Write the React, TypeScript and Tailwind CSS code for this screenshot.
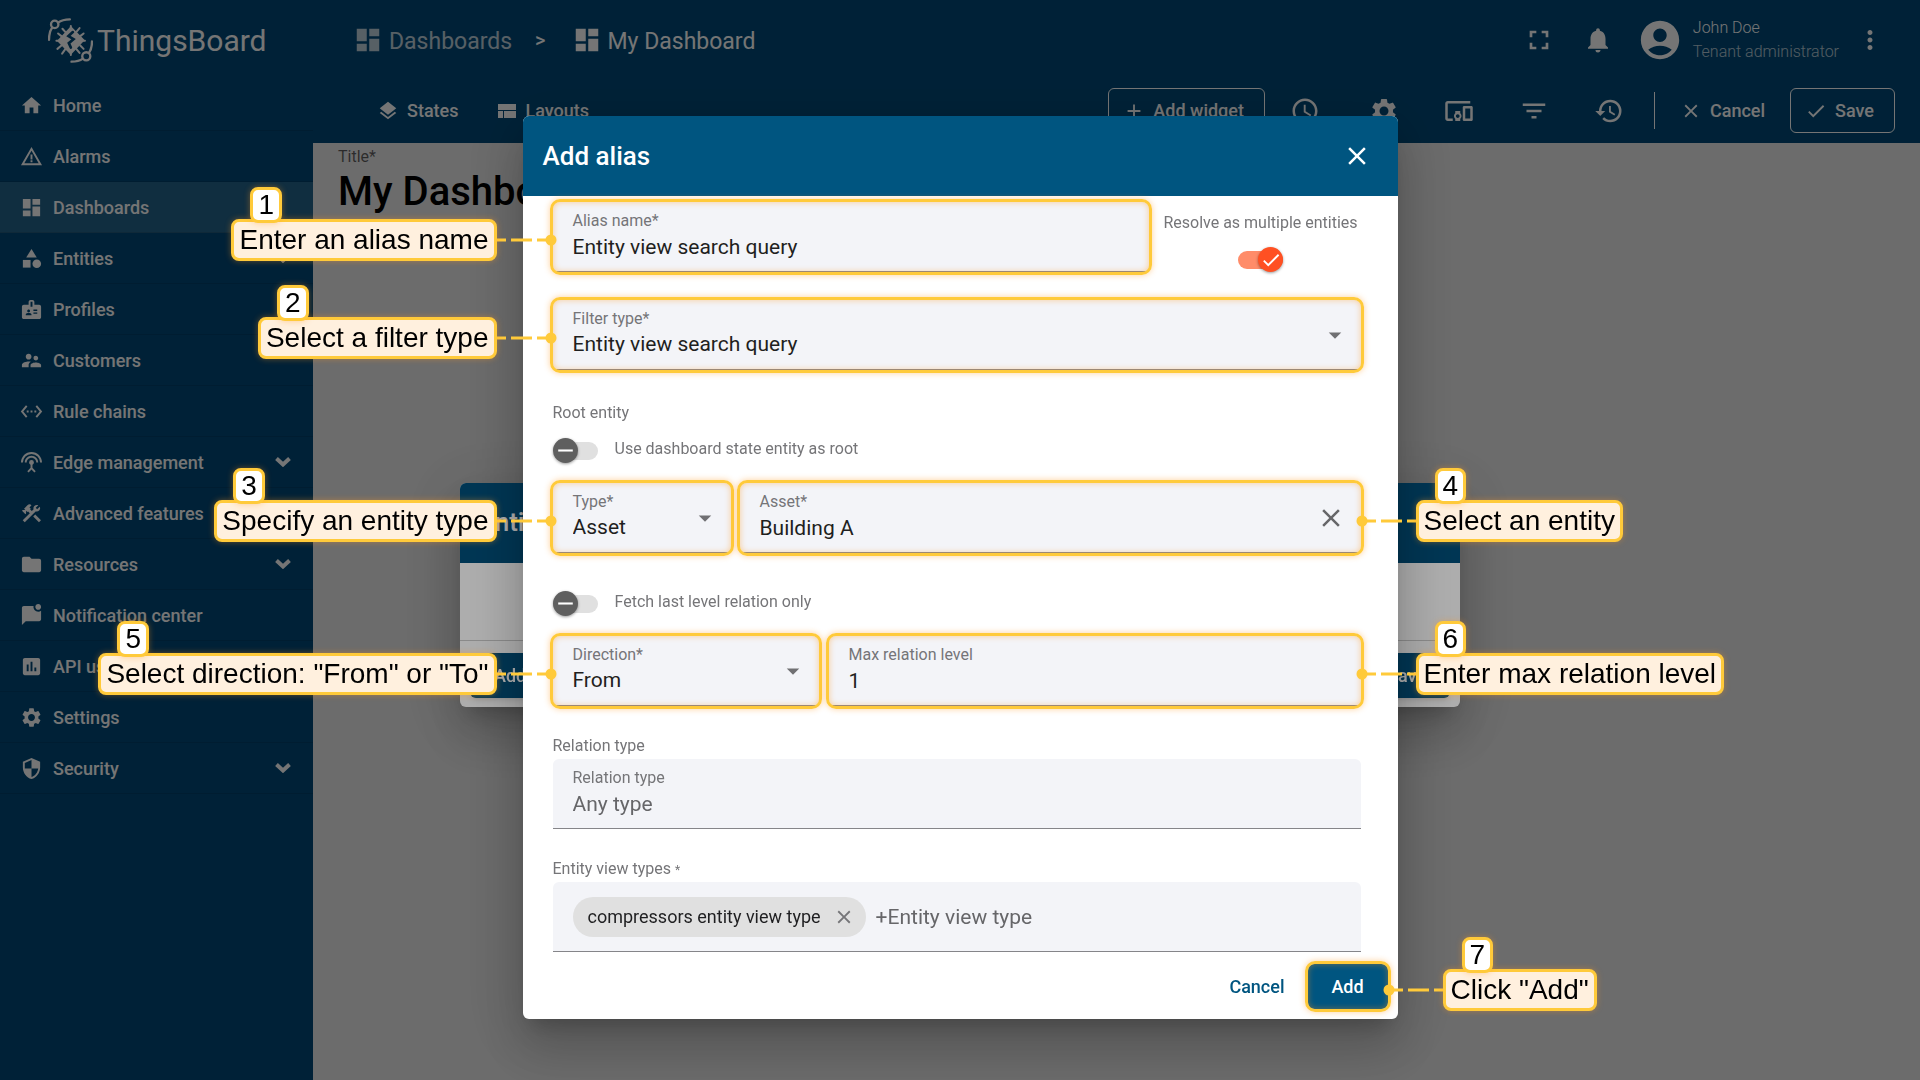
import { useState } from "react";
import type { ReactNode } from "react";
import type { IconType } from "react-icons";
import {
  MdAccessTime,
  MdAccountCircle,
  MdAdd,
  MdArrowDropDown,
  MdBadge,
  MdCategory,
  MdCheck,
  MdClose,
  MdConstruction,
  MdDashboard,
  MdDevicesOther,
  MdFilterList,
  MdFolder,
  MdFullscreen,
  MdHistory,
  MdHome,
  MdInsertChart,
  MdLayers,
  MdMarkChatUnread,
  MdMoreVert,
  MdNotifications,
  MdRemove,
  MdSecurity,
  MdSettings,
  MdSettingsEthernet,
  MdSettingsInputAntenna,
  MdSupervisorAccount,
  MdWarningAmber,
} from "react-icons/md";

type MenuItem = {
  name: string;
  icon: IconType;
  expandable?: boolean;
  active?: boolean;
};

const menu: MenuItem[] = [
  { name: "Home", icon: MdHome },
  { name: "Alarms", icon: MdWarningAmber },
  { name: "Dashboards", icon: MdDashboard, active: true },
  { name: "Entities", icon: MdCategory, expandable: true },
  { name: "Profiles", icon: MdBadge },
  { name: "Customers", icon: MdSupervisorAccount },
  { name: "Rule chains", icon: MdSettingsEthernet },
  { name: "Edge management", icon: MdSettingsInputAntenna, expandable: true },
  { name: "Advanced features", icon: MdConstruction, expandable: true },
  { name: "Resources", icon: MdFolder, expandable: true },
  { name: "Notification center", icon: MdMarkChatUnread },
  { name: "API usage", icon: MdInsertChart },
  { name: "Settings", icon: MdSettings },
  { name: "Security", icon: MdSecurity, expandable: true },
];

function Logo() {
  return (
    <svg viewBox="0 0 134 134" className="size-[45px]" fill="none" stroke="currentColor" strokeWidth="7" strokeLinecap="round">
      <circle cx="20" cy="19" r="11" />
      <circle cx="114" cy="114" r="12" />
      <path d="M3 65C3 50 5 39 12 29M30 14C40 6 50 4 65 4" />
      <path d="M131 70C131 85 128 95 122 104M104 121C94 128 84 130 70 130" />
      <path
        d="M52 42L43 32M68 30V24M40 54L30 46M84 42L94 30M96 54L106 46M104 68H110M96 82L106 92M84 92L94 104M32 68H25M40 82L28 92M52 92L42 106M68 104V110"
        strokeWidth="6"
      />
      <path
        d="M68 30L104 66L68 104L32 68Z"
        fill="currentColor"
        strokeLinejoin="round"
        strokeWidth="8"
      />
      <path d="M74 42L61 54L76 63L62 75L68 88" stroke="#004a79" strokeWidth="8" />
    </svg>
  );
}

function Chevron() {
  return (
    <svg viewBox="0 0 16 10" className="h-[10px] w-4" fill="none" stroke="currentColor" strokeWidth="4">
      <path d="M1.5 1.5L8 7.5L14.5 1.5" />
    </svg>
  );
}

function LayoutsIcon() {
  return (
    <svg viewBox="0 0 22 22" className="size-[22px]" fill="currentColor">
      <path d="M2 4h18v6H2zM2 11h5v7H2zM8 11h12v7H8z" />
    </svg>
  );
}

function Sidebar() {
  return (
    <aside className="w-[313px] shrink-0 bg-[#004a79] text-white">
      <div className="flex h-20 items-center gap-1 pl-12">
        <Logo />
        <span className="text-[30px]">ThingsBoard</span>
      </div>
      <nav>
        {menu.map((item) => (
          <a
            key={item.name}
            href="#"
            className={
              "flex h-[51px] items-center gap-[10px] border-b border-black/10 pr-[22px] pl-5 text-[18px] font-medium" +
              (item.active ? " bg-white/15" : "")
            }
          >
            <item.icon className="size-[23px]" />
            <span className="flex-1">{item.name}</span>
            {item.expandable && <Chevron />}
          </a>
        ))}
      </nav>
    </aside>
  );
}

function IconButton({ label, children }: { label: string; children: ReactNode }) {
  return (
    <button aria-label={label} className="flex items-center justify-center">
      {children}
    </button>
  );
}

function TopBar() {
  return (
    <header className="bg-[#004a79] text-white">
      <div className="flex h-20 items-center pr-[35px] pl-10">
        <a href="#" className="flex items-center gap-[6px] text-[23px] opacity-75">
          <MdDashboard className="size-[30px]" />
          <span className="pt-1">Dashboards</span>
        </a>
        <span className="mr-[26px] ml-[23px] text-[20px] font-medium">&gt;</span>
        <a href="#" className="flex items-center gap-[6px] text-[23px]">
          <MdDashboard className="size-[30px]" />
          <span className="pt-1">My Dashboard</span>
        </a>
        <div className="ml-auto flex items-center">
          <IconButton label="Fullscreen">
            <MdFullscreen className="size-8" />
          </IconButton>
          <div className="ml-7">
            <IconButton label="Notifications">
              <MdNotifications className="size-[30px]" />
            </IconButton>
          </div>
          <MdAccountCircle className="mr-[10px] ml-6 size-[46px]" />
          <div className="text-[16px] leading-6 font-light">
            <div>John Doe</div>
            <div className="opacity-70">Tenant administrator</div>
          </div>
          <div className="ml-4">
            <IconButton label="User menu">
              <MdMoreVert className="size-[30px]" />
            </IconButton>
          </div>
        </div>
      </div>
      <div className="flex h-[63px] items-center pr-[25px] pb-[2px] pl-16 text-[18px] font-medium">
        <button className="flex items-center gap-2">
          <MdLayers className="size-[22px]" />
          States
        </button>
        <button className="ml-[37px] flex items-center gap-2">
          <LayoutsIcon />
          Layouts
        </button>
        <button className="ml-auto flex h-[45px] items-center gap-2 rounded-md border border-white pr-5 pl-[14px]">
          <MdAdd className="size-[22px]" />
          Add widget
        </button>
        <div className="mr-[30px] ml-[25px] flex gap-[45px]">
          <div className="mr-1">
            <IconButton label="Time window">
              <MdAccessTime className="size-[30px]" />
            </IconButton>
          </div>
          <IconButton label="Settings">
            <MdSettings className="size-[30px]" />
          </IconButton>
          <IconButton label="Entity aliases">
            <MdDevicesOther className="size-[30px]" />
          </IconButton>
          <IconButton label="Filters">
            <MdFilterList className="size-[30px]" />
          </IconButton>
          <IconButton label="Versions">
            <MdHistory className="size-[30px]" />
          </IconButton>
        </div>
        <div className="h-[37px] w-px bg-white" />
        <button className="mx-[25px] flex items-center gap-2">
          <MdClose className="size-[22px]" />
          Cancel
        </button>
        <button className="flex h-[45px] items-center gap-2 rounded-md border border-white pr-5 pl-[14px]">
          <MdCheck className="size-[22px]" />
          Save
        </button>
      </div>
    </header>
  );
}

function AliasesDialog() {
  return (
    <div className="fixed inset-0 flex items-center justify-center bg-black/32 pt-[109px]">
      <div className="w-full max-w-[1000px] rounded-md bg-white shadow-[0_14px_19px_-9px_rgba(0,0,0,0.2),0_30px_48px_4px_rgba(0,0,0,0.14),0_11px_58px_10px_rgba(0,0,0,0.12)]">
        <div className="flex h-20 items-center justify-between rounded-t-md bg-[#00507c] px-5 text-white">
          <h2 className="text-[26px] font-medium">Entity aliases</h2>
          <IconButton label="Close aliases">
            <MdClose className="size-[30px]" />
          </IconButton>
        </div>
        <div className="h-[78px] border-b border-black/20" />
        <div className="flex justify-between px-[10px] pt-3 pb-[9px] text-[18px] font-medium text-white">
          <button className="h-[45px] rounded-md bg-[#00507c] px-6 shadow-md">Add alias</button>
          <button className="h-[45px] rounded-md bg-[#00507c] px-6 shadow-md">Save</button>
        </div>
      </div>
    </div>
  );
}

type CalloutProps = {
  step: number;
  text: string;
  side: "left" | "right";
};

function Connector({ side }: { side: "left" | "right" }) {
  return (
    <svg
      viewBox="0 0 60 12"
      className={"h-3 w-[60px] shrink-0 " + (side === "left" ? "rotate-180" : "")}
      fill="none"
    >
      <path d="M6 6H60" stroke="#ffca3a" strokeWidth="3" strokeDasharray="14 5 21 5 20 0" />
      <circle cx="6" cy="6" r="5.5" fill="#ffca3a" />
    </svg>
  );
}

// Numbered hint that hangs beside the highlighted control
function Callout({ step, text, side }: CalloutProps) {
  const place = side === "left" ? "right-full -mr-1 flex-row-reverse" : "left-full -ml-[5px]";
  return (
    <div className={"absolute top-1.5 bottom-0 z-10 flex items-center " + place}>
      <Connector side={side} />
      <div className="relative rounded-lg border-3 border-[#ffca3a] bg-[#fff0de] px-[5px] font-['Liberation_Sans',sans-serif] text-[28px] leading-9 whitespace-nowrap text-black shadow-[0_0_6px_rgba(255,150,30,0.4)]">
        {text}
        <span className="absolute bottom-full left-4 -mb-px rounded-lg border-3 border-[#ffca3a] bg-white px-[5px] leading-[30px] shadow-[0_0_6px_rgba(255,150,30,0.4)]">
          {step}
        </span>
      </div>
    </div>
  );
}

function Highlight({ children, className = "" }: { children: ReactNode; className?: string }) {
  return (
    <div className={"relative " + className}>
      {children}
      <div className="pointer-events-none absolute -inset-[3px] rounded-[10px] border-3 border-[#ffca3a] shadow-[0_0_6px_rgba(255,150,30,0.45),inset_0_0_6px_rgba(255,150,30,0.45)]" />
    </div>
  );
}

type FieldProps = {
  id: string;
  label: string;
  children: ReactNode;
  suffix?: ReactNode;
};

function Field({ id, label, children, suffix }: FieldProps) {
  return (
    <div className="flex h-[70px] items-center rounded-t-md border-b border-[#858589] bg-[#f3f4f8] pr-[11px] pl-5">
      <div className="flex min-w-0 flex-1 flex-col">
        <label htmlFor={id} className="text-[16px] leading-5 text-[#757578]">
          {label}
        </label>
        {children}
      </div>
      {suffix}
    </div>
  );
}

const control =
  "h-8 w-full min-w-0 appearance-none bg-transparent text-[21px] text-[#1f1f21] outline-none placeholder:text-[#666669]";

function Arrow() {
  return <MdArrowDropDown className="pointer-events-none size-[30px] shrink-0 text-[#707073]" />;
}

type ToggleProps = {
  id: string;
  checked: boolean;
  onChange: (value: boolean) => void;
};

function Toggle({ id, checked, onChange }: ToggleProps) {
  return (
    <span className="relative flex h-[25px] w-[45px] items-center">
      <input
        id={id}
        type="checkbox"
        role="switch"
        checked={checked}
        onChange={(e) => onChange(e.target.checked)}
        className="h-[18px] w-full appearance-none rounded-full bg-[#e0e0e0] checked:bg-[#ff8c69]"
      />
      <span
        className={
          "pointer-events-none absolute top-0 flex size-[25px] items-center justify-center rounded-full text-white shadow-[0_1px_3px_rgba(0,0,0,0.4)] " +
          (checked ? "right-0 bg-[#ff5022]" : "left-0 bg-[#5f5f5f]")
        }
      >
        {checked ? <MdCheck className="size-[22px]" /> : <MdRemove className="size-[25px]" />}
      </span>
    </span>
  );
}

function AddAliasDialog() {
  const [alias, setAlias] = useState("Entity view search query");
  const [asset, setAsset] = useState("Building A");
  const [level, setLevel] = useState("1");
  const [relation, setRelation] = useState("");
  const [multiple, setMultiple] = useState(true);
  const [stateRoot, setStateRoot] = useState(false);
  const [lastLevel, setLastLevel] = useState(false);

  return (
    <div className="fixed inset-0 flex items-center justify-center bg-black/32 pt-[55px]">
      <form
        onSubmit={(e) => e.preventDefault()}
        className="w-full max-w-[875px] rounded-md bg-white text-[16px] text-[#757578] shadow-[0_14px_19px_-9px_rgba(0,0,0,0.2),0_30px_48px_4px_rgba(0,0,0,0.14),0_11px_58px_10px_rgba(0,0,0,0.12)]"
      >
        <div className="flex h-20 items-center justify-between rounded-t-md bg-[#005580] pr-[26px] pl-5 text-white">
          <h2 className="text-[26px] font-medium">Add alias</h2>
          <IconButton label="Close">
            <MdClose className="size-[30px]" />
          </IconButton>
        </div>

        <div className="pt-[6px] pr-[37px] pl-[30px]">
          <div className="flex gap-3">
            <Highlight className="flex-1">
              <Field id="alias" label="Alias name*">
                <input id="alias" value={alias} onChange={(e) => setAlias(e.target.value)} className={control} />
              </Field>
              <Callout step={1} text="Enter an alias name" side="left" />
            </Highlight>
            <div className="flex w-[200px] flex-col items-center justify-between pt-[11px]">
              <label htmlFor="multiple" className="leading-5 whitespace-nowrap">
                Resolve as multiple entities
              </label>
              <Toggle id="multiple" checked={multiple} onChange={setMultiple} />
            </div>
          </div>

          <Highlight className="mt-7">
            <Field id="filter" label="Filter type*" suffix={<Arrow />}>
              <select id="filter" className={control}>
                <option>Entity view search query</option>
              </select>
            </Field>
            <Callout step={2} text="Select a filter type" side="left" />
          </Highlight>

          <div className="mt-[33px] leading-5">Root entity</div>
          <div className="mt-[15px] flex items-center gap-[17px]">
            <Toggle id="state-root" checked={stateRoot} onChange={setStateRoot} />
            <label htmlFor="state-root" className="pb-1 leading-5">
              Use dashboard state entity as root
            </label>
          </div>

          <div className="mt-5 flex gap-[9px]">
            <Highlight className="w-[178px]">
              <Field id="type" label="Type*" suffix={<Arrow />}>
                <select id="type" className={control}>
                  <option>Asset</option>
                </select>
              </Field>
              <Callout step={3} text="Specify an entity type" side="left" />
            </Highlight>
            <Highlight className="flex-1">
              <Field
                id="asset"
                label="Asset*"
                suffix={
                  <button type="button" aria-label="Clear asset" onClick={() => setAsset("")} className="mr-1 text-[#666669]">
                    <MdClose className="size-[30px]" />
                  </button>
                }
              >
                <input id="asset" value={asset} onChange={(e) => setAsset(e.target.value)} className={control} />
              </Field>
              <Callout step={4} text="Select an entity" side="right" />
            </Highlight>
          </div>

          <div className="mt-[38px] flex items-center gap-[17px]">
            <Toggle id="last-level" checked={lastLevel} onChange={setLastLevel} />
            <label htmlFor="last-level" className="pb-1 leading-5">
              Fetch last level relation only
            </label>
          </div>

          <div className="mt-5 flex gap-[10px]">
            <Highlight className="flex-1">
              <Field id="direction" label="Direction*" suffix={<Arrow />}>
                <select id="direction" className={control}>
                  <option>From</option>
                  <option>To</option>
                </select>
              </Field>
              <Callout step={5} text={'Select direction: "From" or "To"'} side="left" />
            </Highlight>
            <Highlight className="flex-2">
              <Field id="level" label="Max relation level">
                <input id="level" value={level} onChange={(e) => setLevel(e.target.value)} className={control} />
              </Field>
              <Callout step={6} text="Enter max relation level" side="right" />
            </Highlight>
          </div>

          <div className="mt-[30px] mb-[3px] leading-5">Relation type</div>
          <Field id="relation" label="Relation type">
            <input
              id="relation"
              value={relation}
              placeholder="Any type"
              onChange={(e) => setRelation(e.target.value)}
              className={control}
            />
          </Field>

          <label htmlFor="view-type" className="mt-[30px] mb-[3px] block h-5 leading-5">
            Entity view types <span className="text-[12px]">*</span>
          </label>
          <div className="flex h-[70px] items-center gap-[10px] rounded-t-md border-b border-[#858589] bg-[#f3f4f8] px-5">
            <span className="flex h-10 shrink-0 items-center gap-3 rounded-full bg-[#e0e0e0] pr-[11px] pl-[15px] text-[18px] whitespace-nowrap text-[#1f1f21]">
              compressors entity view type
              <button type="button" aria-label="Remove type" className="text-[#757578]">
                <MdClose className="size-[22px]" />
              </button>
            </span>
            <input id="view-type" placeholder="+Entity view type" className={control} />
          </div>
        </div>

        <div className="flex justify-end gap-2 pt-3 pr-[10px] pb-[10px] text-[18px] font-medium">
          <button type="button" className="h-[45px] px-[15px] text-[#005580]">
            Cancel
          </button>
          <Highlight>
            <button type="submit" className="h-[45px] w-20 rounded-md bg-[#005580] text-white">
              Add
            </button>
            <Callout step={7} text={'Click "Add"'} side="right" />
          </Highlight>
        </div>
      </form>
    </div>
  );
}

export default function App() {
  return (
    <div className="flex min-h-screen bg-[#ebebeb] font-[Roboto,sans-serif]">
      <Sidebar />
      <div className="flex-1">
        <TopBar />
        <main className="px-[25px] pt-1">
          <label htmlFor="title" className="block text-[16px] leading-5 text-black/60">
            Title*
          </label>
          <input
            id="title"
            defaultValue="My Dashboard"
            className="h-[50px] w-full bg-transparent text-[40px] font-medium text-black outline-none"
          />
        </main>
      </div>
      <AliasesDialog />
      <AddAliasDialog />
    </div>
  );
}
